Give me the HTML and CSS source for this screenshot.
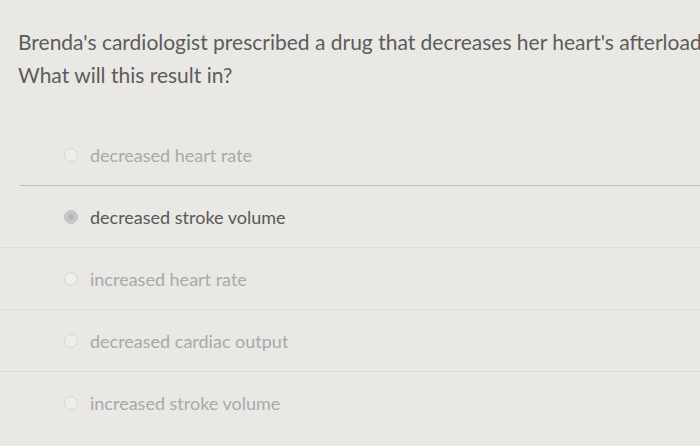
FILE: index.html
```html
<!DOCTYPE html>
<html>
<head>
<meta charset="utf-8">
<link rel="stylesheet" href="styles.css">
</head>
<body>
<div class="page">
  <div class="question">
    <p class="q-line">Brenda's cardiologist prescribed a drug that decreases her heart's afterload.</p>
    <p class="q-line">What will this result in?</p>
  </div>
  <ul class="options">
    <li class="option"><span class="radio"></span><span class="label">decreased heart rate</span></li>
    <li class="option checked"><span class="radio"></span><span class="label">decreased stroke volume</span></li>
    <li class="option"><span class="radio"></span><span class="label">increased heart rate</span></li>
    <li class="option"><span class="radio"></span><span class="label">decreased cardiac output</span></li>
    <li class="option last"><span class="radio"></span><span class="label">increased stroke volume</span></li>
  </ul>
</div>
</body>
</html>
```
FILE: styles.css
```css
html, body {
  margin: 0;
  padding: 0;
}
body {
  width: 700px;
  height: 446px;
  overflow: hidden;
  background: #e9e8e5;
  font-family: Lato, "Liberation Sans", sans-serif;
}
.page {
  display: flex;
  flex-direction: column;
}
.question {
  padding: 25px 0 0 18px;
  height: 124px;
  box-sizing: border-box;
  overflow: hidden;
}
.q-line {
  margin: 0;
  white-space: nowrap;
  font-size: 21px;
  line-height: 33px;
  color: #5c5c5c;
}
.options {
  list-style: none;
  margin: 0;
  padding: 0;
}
.option {
  height: 62px;
  box-sizing: border-box;
  display: flex;
  align-items: center;
  gap: 12px;
  padding-left: 64px;
  border-bottom: 1px solid #dddcd8;
}
.option:first-child {
  border-bottom: 1px solid #bfbebb;
  margin-left: 20px;
  padding-left: 44px;
}
.option.last {
  border-bottom: none;
}
.radio {
  width: 14px;
  height: 14px;
  border-radius: 50%;
  box-sizing: border-box;
  border: 1px solid #d6d5d2;
  background: #efeeeb;
  flex: none;
}
.option.checked .radio {
  background: #b4b4b4;
  border-color: #c4c4c4;
  box-shadow: inset 0 0 0 3px #c9c9c9;
}
.label {
  font-size: 18px;
  color: #a9a9a9;
}
.option.checked .label {
  color: #585858;
}
```
